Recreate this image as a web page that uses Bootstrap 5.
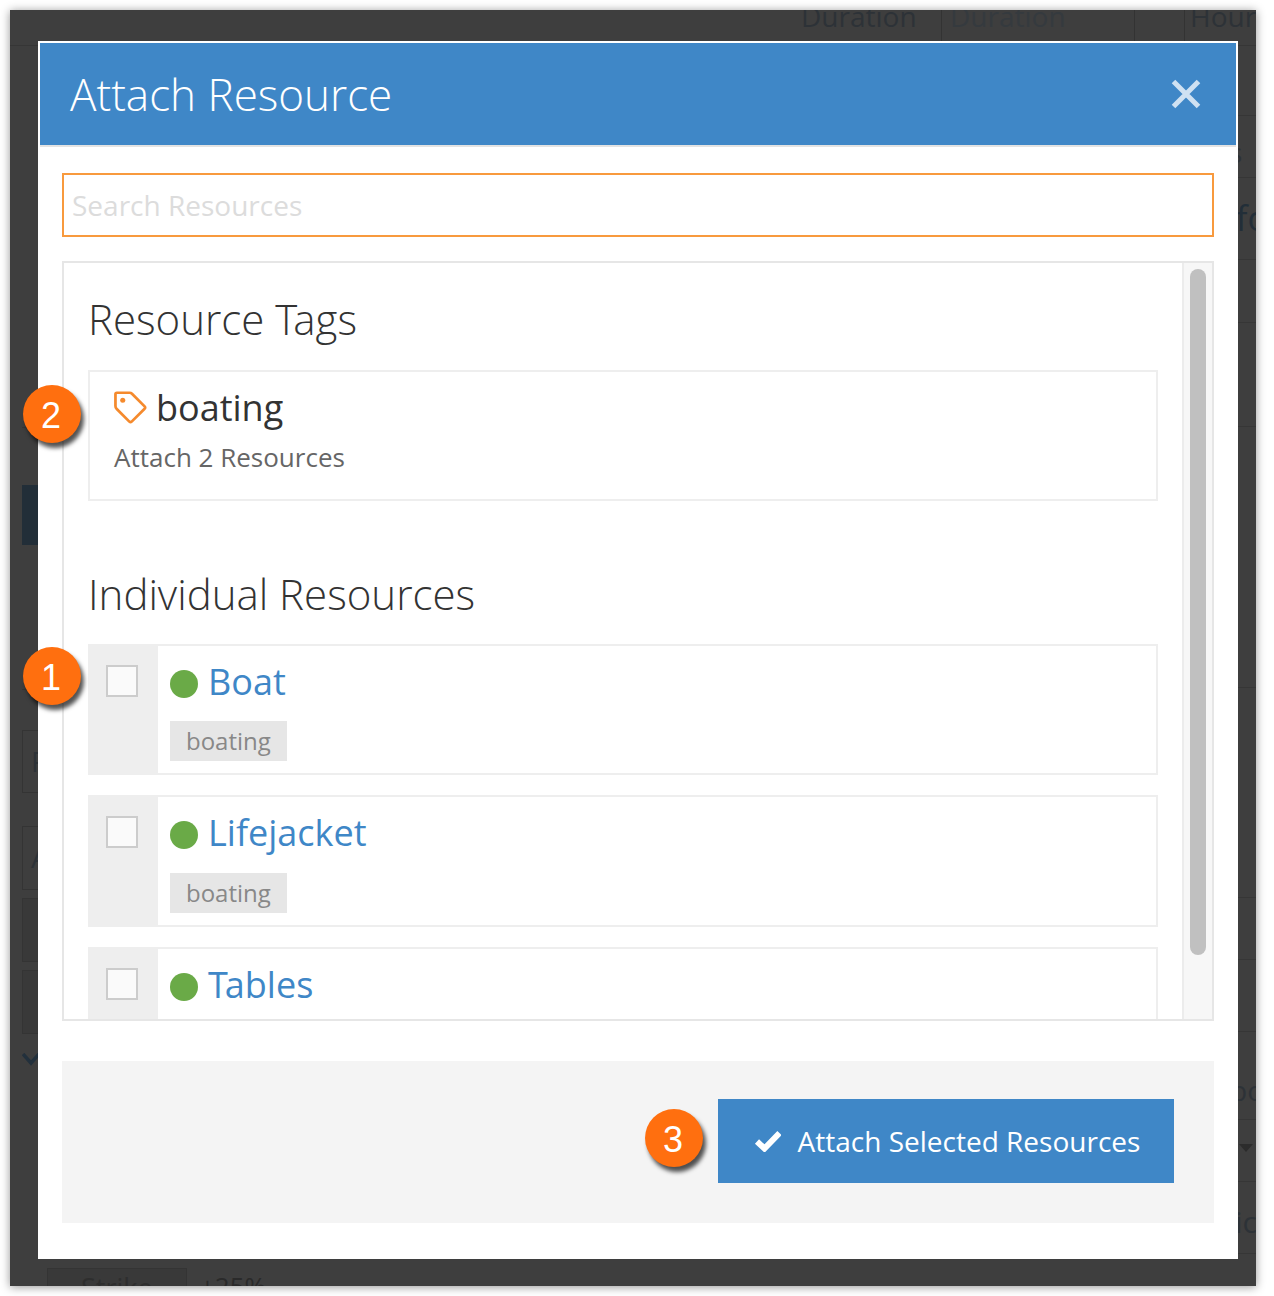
<!doctype html>
<html lang="en">
<head>
<meta charset="utf-8">
<title>Attach Resource</title>
<link rel="stylesheet" href="https://cdn.jsdelivr.net/npm/bootstrap@5.3.0/dist/css/bootstrap.min.css">
<style>
html,body{margin:0;height:1296px;background:#fff;overflow:hidden}
body{font-family:"Open Sans","Noto Sans",sans-serif;padding:10px 18px 10px 10px}
.shot-frame{position:relative;width:1246px;height:1276px;background:#3e3e3e;overflow:hidden;box-shadow:0 1px 9px rgba(0,0,0,.42)}
/* dimmed page behind the dialog */
.dim-page{height:100%;color:#2d3237;font-size:28px;line-height:1.2}
.dim-top{height:36px;padding-left:791px;border-bottom:1px solid #363636;white-space:nowrap;overflow:hidden}
.dim-top>div{flex:none;height:36px}
.dim-top>div>span{display:block;margin-top:-10px}
.dim-top .w1{width:141px;border-right:1px solid #333}
.dim-top .w2{width:193px;padding-left:8px;color:#353a3e;border-right:1px solid #333}
.dim-top .w3{width:50px;border-right:1px solid #333}
.dim-top .w4{padding-left:5px;width:70px}
.dim-left{width:28px;padding-left:12px;overflow:hidden;display:grid;grid-template-rows:339px 43px 57px 60px 95px 50px 40px 63px 33px 64px 8px 64px 8px 64px 36px}
.dim-line{border-bottom:1px solid #363636;white-space:nowrap;padding-top:8px}
.dim-navy{background:#222e38;width:40px}
.dim-box{width:40px;border:1px solid #343434;padding:14px 0 0 8px}
.dim-box-dark{background:#393939}
.dim-mid{min-width:0;position:relative}
.dim-cell{margin-left:9px;width:140px;height:18px;background:#393939;border:1px solid #343434;border-bottom:0;padding:3px 0 0 33px;font-size:27px;overflow:hidden;color:#2e2e2e}
.dim-val{padding:3px 0 0 13px;font-size:26px;height:18px;overflow:hidden;color:#2a2a2a}
.dim-right{width:18px;overflow:hidden;display:grid;grid-template-rows:70px 62px 82px 63px 104px 261px 210px 62px 72px 88px 62px 72px 32px;white-space:nowrap}
.dim-right>div{border-bottom:1px solid #363636;overflow:hidden}
.dim-right>div:last-child{border-bottom:0}
.clip-s{margin:20px 0 0 -9px}
.clip-fo{margin:20px 0 0 -2px;color:#222e38;font-size:34px}
.clip-bo{margin:42px 0 0 -8px}
.clip-ic{margin:22px 0 0 -3px;font-size:30px}
.caret-dim{width:0;height:0;margin:24px 0 0 1px;border:7px solid transparent;border-top:8px solid #2c2c2c;border-bottom:0}
.dim-chev{width:16px;height:14px;margin-top:12px}
/* dialog */
.attach-dialog{position:absolute;left:28px;top:31px;width:1200px;height:1218px;border:0;border-radius:0;background:#fff}
.attach-head{height:104px;margin:2px 2px 0;padding:0 35px 0 30px;background:#3f87c7;border:0;border-bottom:2px solid #e3e3e3;border-radius:0}
.attach-title{font-size:44px;font-weight:300;color:#fff;line-height:1.2;margin:0}
.x-btn{padding:0;border:0;background:none;line-height:0}
.attach-body{padding:26px 24px 36px}
.attach-search{height:64px;padding:0 8px;border:2px solid #f89a3e;border-radius:0;font-size:28px;color:#555;box-shadow:none}
.attach-search::placeholder{color:#dcdcdc;opacity:1}
.attach-box{height:760px;margin-top:24px;border:2px solid #e6e6e6}
.attach-scroll{padding:0 24px;overflow:hidden;min-width:0}
.scroll-track{width:30px;flex:none;background:#f7f7f7;border-left:2px solid #ececec;padding:6px 0 0 6px}
.scroll-thumb{width:16px;height:686px;border-radius:8px;background:#c0c0c0}
.sect-title{font-size:42px;font-weight:300;color:#333;line-height:1.2;margin:0}
.sect-a{padding:31px 0 25.6px}
.sect-b{padding:68px 0 24.6px}
.kern-big{letter-spacing:-4px}
.kern-mid{letter-spacing:-3px}
.tag-box{height:131px;border:2px solid #eee;padding:13px 24px 0}
.tag-name{font-size:36px;color:#333;line-height:46px}
.tag-sub{font-size:26px;color:#666;line-height:36px;margin-top:8px}
.res-row{height:131.5px;border:2px solid #eee;margin-bottom:20px}
.res-row:last-child{margin-bottom:0}
.res-check{width:70px;margin:-2px 0 -2px -2px;padding:21px 0 0 18px;background:#eee;flex:none}
.res-check .form-check-input{width:32px;height:32px;margin:0;border:2px solid #ccc;border-radius:0;background-color:#fafafa}
.res-main{padding:11px 0 0 12px}
.res-dot{width:28px;height:28px;border-radius:50%;background:#6aaa47;flex:none;margin-top:13px}
.res-link{font-size:36px;line-height:50px;color:#3f87c7;text-decoration:none;margin-left:10px}
.res-tag{display:inline-block;margin-top:14.4px;height:40px;padding:0 16px;background:#e6e6e6;color:#888;font-size:24px;line-height:40px}
.attach-foot{height:162px;margin-top:40px;padding:38px 40px 40px;background:#f4f4f4;border:0;border-radius:0}
.attach-go{width:456px;height:84px;padding:0;border:0;border-radius:0;background:#3f87c7;color:#fff;font-size:28px;line-height:1}
.attach-go:hover{background:#3f87c7;color:#fff}
.go-check{margin-right:17px}
.step-pin{position:absolute;width:58px;height:58px;border-radius:50%;background:#ff6f0f;color:#fff;font-family:"Liberation Sans",Arial,sans-serif;font-size:36px;line-height:62px;text-indent:-2px;text-align:center;box-shadow:3px 5px 4px rgba(0,0,0,.68)}
.pin-2{left:-15px;top:344px}
.pin-1{left:-15px;top:606px}
.pin-3{left:607px;top:1068px}
</style>
</head>
<body>
<div class="shot-frame">
  <div class="dim-page d-flex flex-column">
    <div class="dim-top d-flex">
      <div class="w1"><span>Duration</span></div>
      <div class="w2"><span>Duration</span></div>
      <div class="w3"></div>
      <div class="w4"><span>Hours</span></div>
    </div>
    <div class="d-flex flex-grow-1">
      <div class="dim-left">
        <div></div>
        <div class="dim-line">es</div>
        <div></div>
        <div class="dim-navy"></div>
        <div></div>
        <div class="dim-line">&nbsp;e</div>
        <div></div>
        <div class="dim-box">F</div>
        <div></div>
        <div class="dim-box">A</div>
        <div></div>
        <div class="dim-box dim-box-dark"></div>
        <div></div>
        <div class="dim-box dim-box-dark"></div>
        <div><svg class="dim-chev" viewBox="0 0 16 14" aria-hidden="true"><path d="M1 1 L9 10 L17 1" fill="none" stroke="#22303c" stroke-width="3.5"/></svg></div>
      </div>
      <div class="dim-mid flex-grow-1 d-flex align-items-end">
        <div class="dim-cell">Strike</div>
        <div class="dim-val">+25%</div>
      </div>
      <div class="dim-right">
        <div></div>
        <div><div class="clip-s">s</div></div>
        <div><div class="clip-fo">fo</div></div>
        <div></div><div></div><div></div><div></div><div></div><div></div>
        <div><div class="clip-bo">bo</div></div>
        <div><div class="caret-dim"></div></div>
        <div><div class="clip-ic">ic</div></div>
        <div></div>
      </div>
    </div>
  </div>

  <div class="modal-content attach-dialog" role="dialog" aria-label="Attach Resource">
    <div class="modal-header attach-head d-flex justify-content-between align-items-center">
      <h1 class="modal-title attach-title">Attach Resource</h1>
      <button type="button" class="x-btn" aria-label="Close">
        <svg width="30" height="30" viewBox="0 0 30 30" aria-hidden="true"><path d="M2.5 2.5 L27.5 27.5 M27.5 2.5 L2.5 27.5" stroke="#cfe1f2" stroke-width="5" fill="none"/></svg>
      </button>
    </div>
    <div class="modal-body attach-body">
      <input type="text" class="form-control attach-search" placeholder="Search Resources">
      <div class="attach-box d-flex">
        <div class="attach-scroll flex-grow-1">
          <div class="sect-a"><h2 class="sect-title">Resource <span class="kern-big">T</span>ags</h2></div>
          <div class="tag-box">
            <div class="tag-name d-flex align-items-center gap-2">
              <svg width="34" height="34" viewBox="0 0 35 35" aria-hidden="true"><path d="M3 1.8 H16 Q17.500 1.800 18.500 2.800 L31.500 15.800 Q32.600 17 31.500 18.200 L18.200 31.500 Q17 32.600 15.800 31.500 L2.600 18.200 Q1.500 17 1.500 15.500 V3.300 Q1.500 1.800 3 1.800 Z" fill="none" stroke="#f58a2d" stroke-width="2.800" stroke-linejoin="round"/><circle cx="9" cy="9.500" r="2.600" fill="#f58a2d"/></svg>
              <span>boating</span>
            </div>
            <div class="tag-sub">Attach 2 Resources</div>
          </div>
          <div class="sect-b"><h2 class="sect-title">Individual Resources</h2></div>
          <div class="res-row d-flex">
            <div class="res-check"><input class="form-check-input" type="checkbox" aria-label="Boat"></div>
            <div class="res-main">
              <div class="d-flex"><span class="res-dot"></span><a href="#" class="res-link">Boat</a></div>
              <span class="res-tag">boating</span>
            </div>
          </div>
          <div class="res-row d-flex">
            <div class="res-check"><input class="form-check-input" type="checkbox" aria-label="Lifejacket"></div>
            <div class="res-main">
              <div class="d-flex"><span class="res-dot"></span><a href="#" class="res-link">Lifejacket</a></div>
              <span class="res-tag">boating</span>
            </div>
          </div>
          <div class="res-row d-flex">
            <div class="res-check"><input class="form-check-input" type="checkbox" aria-label="Tables"></div>
            <div class="res-main">
              <div class="d-flex"><span class="res-dot"></span><a href="#" class="res-link"><span class="kern-mid">T</span>ables</a></div>
              <span class="res-tag">boating</span>
            </div>
          </div>
        </div>
        <div class="scroll-track"><div class="scroll-thumb"></div></div>
      </div>
      <div class="modal-footer attach-foot d-flex justify-content-end align-items-start">
        <button type="button" class="btn attach-go m-0 d-flex align-items-center justify-content-center">
          <svg class="go-check" width="29" height="22" viewBox="0 0 29 22" aria-hidden="true"><path d="M5 11.500 L12.500 18.500 L27.500 3" fill="none" stroke="#fff" stroke-width="6"/></svg>
          <span>Attach Selected Resources</span>
        </button>
      </div>
    </div>
    <div class="step-pin pin-2">2</div>
    <div class="step-pin pin-1">1</div>
    <div class="step-pin pin-3">3</div>
  </div>
</div>
<script src="https://cdn.jsdelivr.net/npm/bootstrap@5.3.0/dist/js/bootstrap.bundle.min.js"></script>
</body>
</html>
